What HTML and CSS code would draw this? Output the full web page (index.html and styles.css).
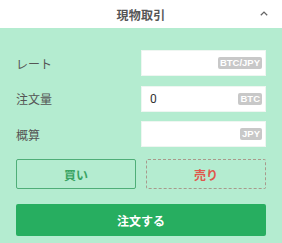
FILE: index.html
```html
<!DOCTYPE html>
<html lang="ja">
<head>
<meta charset="utf-8">
<link rel="stylesheet" href="styles.css">
</head>
<body>
<div class="panel">
  <div class="header">
    <span></span>
    <span class="title">現物取引</span>
    <span class="chev"><svg width="8" height="5" viewBox="0 0 8 5"><path d="M0.8 4.3 L4 1.1 L7.2 4.3" fill="none" stroke="#666" stroke-width="1.3"/></svg></span>
  </div>
  <div class="form">
    <div class="fields">
      <div class="label">レート</div>
      <div class="input"><span class="val"></span><span class="badge">BTC/JPY</span></div>
      <div class="label">注文量</div>
      <div class="input"><span class="val">0</span><span class="badge">BTC</span></div>
      <div class="label">概算</div>
      <div class="input"><span class="val"></span><span class="badge">JPY</span></div>
    </div>
    <div class="sides">
      <div class="btn buy">買い</div>
      <div class="btn sell">売り</div>
    </div>
    <div class="order">注文する</div>
  </div>
</div>
</body>
</html>
```
FILE: styles.css
```css
* { box-sizing: border-box; }
html, body { margin: 0; padding: 0; }
body {
  font-family: "Noto Sans CJK JP", "Noto Sans", sans-serif;
  background: #b4ecd0;
}
.panel {
  width: 282px;
  height: 243px;
  background: #b4ecd0;
}
.header {
  height: 28px;
  background: #fff;
  display: grid;
  grid-template-columns: 1fr auto 1fr;
  align-items: center;
}
.title {
  font-size: 12px;
  font-weight: 700;
  color: #555;
  letter-spacing: 0.3px;
}
.chev {
  justify-self: end;
  padding-right: 14px;
  display: flex;
  align-items: center;
  margin-top: -1px;
}
.form {
  padding: 22px 16px 0;
}
.fields {
  display: grid;
  grid-template-columns: 1fr 1fr;
  grid-auto-rows: 26px;
  row-gap: 9.5px;
  align-items: center;
}
.label {
  font-size: 12px;
  color: #555;
}
.input {
  height: 26px;
  background: #fff;
  border: 1px solid #eef6f1;
  display: flex;
  align-items: center;
  justify-content: space-between;
  padding: 0 3px 0 8px;
}
.val {
  font-family: "Roboto", "Liberation Sans", sans-serif;
  font-size: 12px;
  color: #333;
}
.badge {
  background: #c8c8c8;
  color: #fff;
  font-family: "Liberation Sans", Arial, sans-serif;
  font-weight: 700;
  font-size: 9.5px;
  line-height: 12px;
  padding: 0 2px;
  border-radius: 2px;
}
.sides {
  margin-top: 12px;
  display: grid;
  grid-template-columns: 1fr 1fr;
  column-gap: 10px;
}
.btn {
  height: 30px;
  display: flex;
  align-items: center;
  justify-content: center;
  font-size: 12px;
  font-weight: 700;
  border-radius: 2px;
}
.buy {
  border: 1px solid #4fae78;
  color: #3aa463;
}
.sell {
  border: 1px dashed #a89a8c;
  color: #e0584c;
}
.order {
  margin-top: 15px;
  height: 32px;
  background: #27ae60;
  border-radius: 2px;
  color: #fff;
  font-size: 12px;
  font-weight: 700;
  display: flex;
  align-items: center;
  justify-content: center;
}
```
